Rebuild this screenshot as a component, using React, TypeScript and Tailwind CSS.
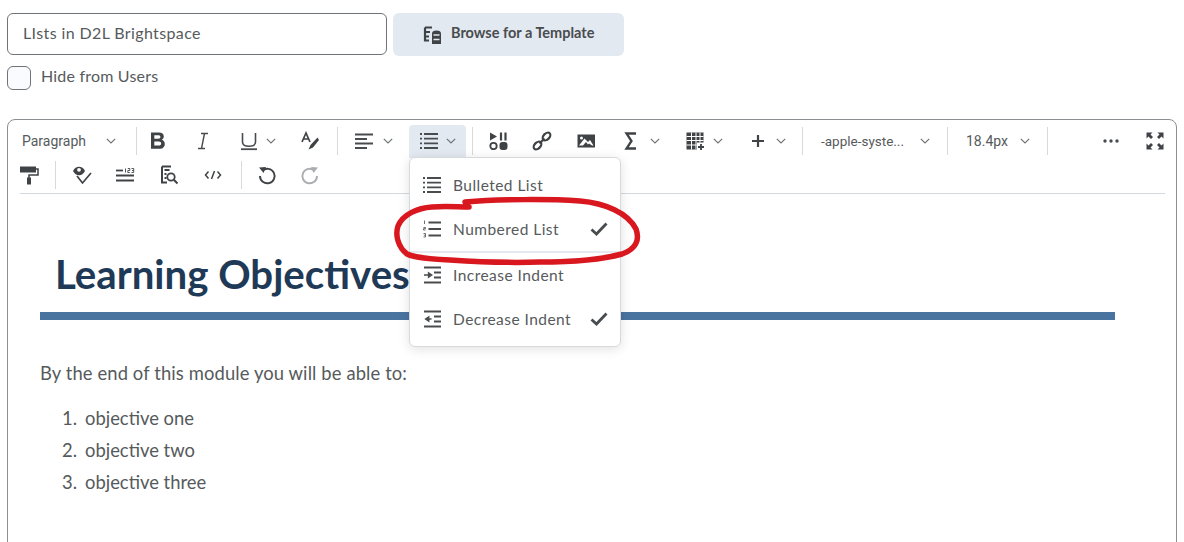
import React from "react";

const C = "#494c4e";

function Svg({ children, className = "" }: { children: React.ReactNode; className?: string }) {
  return (
    <svg viewBox="0 0 20 20" width="20" height="20" fill="none" className={"shrink-0 " + className}>
      {children}
    </svg>
  );
}

function Chev({ className = "" }: { className?: string }) {
  return (
    <svg viewBox="0 0 10 6" width="10" height="6" fill="none" className={"shrink-0 " + className}>
      <path d="M0.8 0.8 L5 5 L9.2 0.8" stroke="#6e7376" strokeWidth="1.2" />
    </svg>
  );
}

function Sep({ className = "" }: { className?: string }) {
  return <div className={"w-px h-[28px] bg-[#d6dadd] shrink-0 " + className} />;
}

const Bold = ({ className = "" }: { className?: string }) => (
  <Svg className={className}>
    <path d="M3 1.500h8c3 0 4.800 1.500 4.800 4 0 1.600-.8 2.800-2.200 3.300 2 .5 3.200 2 3.200 4.100 0 3-2.100 4.900-5.300 4.900H3z M6.300 4.300v3.400h4c1.300 0 2.100-.6 2.100-1.700s-.8-1.700-2.100-1.700z M6.300 10.400v4.200h4.500c1.500 0 2.400-.8 2.400-2.100s-.9-2.100-2.400-2.100z" fill="#3f4345" fillRule="evenodd" />
  </Svg>
);
const Italic = ({ className = "" }: { className?: string }) => (
  <Svg className={className}>
    <path d="M8 2.500h7M5 17.500h7M11.500 2.500 L8.500 17.500" stroke={C} strokeWidth="1.400" />
  </Svg>
);
const Underline = ({ className = "" }: { className?: string }) => (
  <Svg className={className}>
    <path d="M3.500 2v9c0 3 2.300 4.300 6.500 4.300s6.500-1.300 6.500-4.300V2" stroke={C} strokeWidth="1.600" />
    <path d="M2 18.200h16" stroke={C} strokeWidth="1.800" />
  </Svg>
);
const FontColor = ({ className = "" }: { className?: string }) => (
  <Svg className={className}>
    <path d="M2 11 L6 2 L10 11 M3.500 8h5" stroke="#3f4345" strokeWidth="1.700" />
    <path d="M17.500 6.500 L10.500 14 L8.500 18.500 L13 16.500 L19 9z" fill="#3f4345" />
  </Svg>
);
const Lines = ({ d, className = "", w = 2 }: { d: string; className?: string; w?: number }) => (
  <Svg className={className}>
    <path d={d} stroke={C} strokeWidth={w} />
  </Svg>
);
const Align = ({ className = "" }: { className?: string }) => (
  <Lines className={className} d="M1 3.500h18M1 8h12M1 12.500h18M1 17h12" w={1.800} />
);
const Bullets = ({ className = "" }: { className?: string }) => (
  <Svg className={className}>
    <path d="M5 3h14M5 7.700h14M5 12.400h14M5 17h14" stroke={C} strokeWidth="1.800" />
    <path d="M1 3h2M1 7.700h2M1 12.400h2M1 17h2" stroke={C} strokeWidth="1.800" />
  </Svg>
);
const Numbered = ({ className = "" }: { className?: string }) => (
  <Svg className={className}>
    <path d="M6.500 3.500h12.500M6.500 10h12.500M6.500 16.500h12.500" stroke={C} strokeWidth="1.800" />
    <path d="M2.500 1.500v3.500M1.500 8.500h2v1.200h-2v1.300h2M1.500 14.500h2v3.500h-2M1.800 16.200h1.500" stroke={C} strokeWidth="0.800" />
  </Svg>
);
const Indent = ({ out, className = "" }: { out?: boolean; className?: string }) => (
  <Svg className={className}>
    <path d="M2 2.500h17M2 17.500h17M12 7.500h7M12 12.500h7" stroke={C} strokeWidth="1.800" />
    {out ? (
      <path d="M9.500 10H4.500M6.800 7.800 L3.500 10 L6.800 12.200z" stroke={C} strokeWidth="1.300" fill={C} />
    ) : (
      <path d="M2 10h6M6.500 7.800 L9.800 10 L6.500 12.200z" stroke={C} strokeWidth="1.300" fill={C} />
    )}
  </Svg>
);
const Check = () => (
  <svg viewBox="0 0 18 14" width="18" height="14" fill="none" className="shrink-0">
    <path d="M1.500 7.500 L6.500 12 L16.500 1.500" stroke="#494c4e" strokeWidth="2.800" />
  </svg>
);
const Media = ({ className = "" }: { className?: string }) => (
  <Svg className={className}>
    <path d="M2 1.500 L9 5.500 L2 9.500z" fill="#3f4345" />
    <path d="M13 1.500v8M17.500 1.500v8" stroke="#3f4345" strokeWidth="2.200" />
    <circle cx="5.500" cy="15" r="3.200" stroke="#3f4345" strokeWidth="1.800" />
    <rect x="11.500" y="11" width="8" height="8" rx="3" fill="#3f4345" />
  </Svg>
);
const LinkI = ({ className = "" }: { className?: string }) => (
  <Svg className={className}>
    <g stroke="#3f4345" strokeWidth="2.200" fill="none">
      <ellipse cx="5.500" cy="14.500" rx="3" ry="4.500" transform="rotate(45 5.500 14.500)" />
      <ellipse cx="14.500" cy="5.500" rx="3" ry="4.500" transform="rotate(45 14.500 5.500)" />
      <path d="M7.500 12.500 L12.500 7.500" />
    </g>
  </Svg>
);
const ImageI = ({ className = "" }: { className?: string }) => (
  <Svg className={className}>
    <path d="M1.500 3.500h17.500v13H1.500z M3 14.500h4l3-3.500 2 2.500 1 -1 3 2H17.500l-3.500-5.500-2 2-3.500-3.500z" fill="#3f4345" fillRule="evenodd" />
    <circle cx="5.500" cy="7" r="1.500" fill="#fff" />
  </Svg>
);
const Sigma = ({ className = "" }: { className?: string }) => (
  <Svg className={className}>
    <path d="M15 2.500H5.500L10.500 10 L5.500 17.500H15" stroke="#3f4345" strokeWidth="2.300" />
  </Svg>
);
const TableI = ({ className = "" }: { className?: string }) => (
  <Svg className={className}>
    <path d="M1.500 1.500h17v10h-6.500v7H1.500z" fill="#3f4345" />
    <path d="M6.500 1.500v17M11 1.500v17M15 1.500v10M1.500 5.500h17M1.500 9.500h17M1.500 14h10" stroke="#fff" strokeWidth="1" />
    <path d="M16 13v6M13 16h6" stroke="#3f4345" strokeWidth="1.800" />
  </Svg>
);
const Plus = ({ className = "" }: { className?: string }) => (
  <Svg className={className}>
    <path d="M10 4v12M4 10h12" stroke="#3f4345" strokeWidth="2.200" />
  </Svg>
);
const Dots = ({ className = "" }: { className?: string }) => (
  <Svg className={className}>
    <circle cx="4" cy="10" r="1.700" fill={C} />
    <circle cx="10" cy="10" r="1.700" fill={C} />
    <circle cx="16" cy="10" r="1.700" fill={C} />
  </Svg>
);
const FullScreen = ({ className = "" }: { className?: string }) => (
  <Svg className={className}>
    <g fill="#3f4345">
      <path d="M1.500 1.500h6l-2 2 2.500 2.500-2 2-2.500-2.500-2 2z" />
      <path d="M18.500 1.500h-6l2 2-2.500 2.500 2 2 2.500-2.500 2 2z" />
      <path d="M1.500 18.500h6l-2-2 2.500-2.500-2-2-2.500 2.500-2-2z" />
      <path d="M18.500 18.500h-6l2-2-2.500-2.500 2-2 2.500 2.500 2-2z" />
    </g>
  </Svg>
);
const Roller = ({ className = "" }: { className?: string }) => (
  <Svg className={className}>
    <path d="M1 1.500h16v6H1z" fill="#3f4345" />
    <path d="M17 4h2v6H10V13" stroke="#3f4345" strokeWidth="1.500" />
    <path d="M8 12.500h4v7H8z" fill="#3f4345" />
  </Svg>
);
const EyeCheck = ({ className = "" }: { className?: string }) => (
  <Svg className={className}>
    <path d="M1 6c1.500-2.800 3.500-4.200 6-4.200S11.500 3.200 13 6c-1.500 2.800-3.500 4.200-6 4.200S2.500 8.800 1 6z" fill="#3f4345" />
    <circle cx="7" cy="4.800" r="1.900" fill="#fff" />
    <path d="M5 11 L10.500 18 L19 8" stroke="#3f4345" strokeWidth="1.700" />
  </Svg>
);
const WordCount = ({ className = "" }: { className?: string }) => (
  <Svg className={className}>
    <path d="M1 10.500h18M1 15.500h18" stroke="#3f4345" strokeWidth="1.800" />
    <path d="M1 5.500h7" stroke="#3f4345" strokeWidth="1.800" />
    <path d="M10.500 3.500v4M12.800 3.500h2v2h-2v2h2M16.500 3.500h2.200v4h-2.200M17 5.500h1.500" stroke="#3f4345" strokeWidth="0.900" />
  </Svg>
);
const FindDoc = ({ className = "" }: { className?: string }) => (
  <Svg className={className}>
    <path d="M3 1.500h9M3 1.500v16h5M5.500 5h5M5.500 9h2M5.500 13h2" stroke="#3f4345" strokeWidth="2" />
    <circle cx="12" cy="12" r="3.700" stroke="#3f4345" strokeWidth="1.800" />
    <path d="M14.800 14.800 L18.500 18.500" stroke="#3f4345" strokeWidth="2" />
  </Svg>
);
const Code = ({ className = "" }: { className?: string }) => (
  <Svg className={className}>
    <path d="M5.500 6.500 L2.500 10 L5.500 13.500M14.500 6.500 L17.500 10 L14.500 13.500M11.500 6 L8.500 14" stroke="#3f4345" strokeWidth="1.500" />
  </Svg>
);
const Undo = ({ className = "", color = "#3f4345" }: { className?: string; color?: string }) => (
  <Svg className={className}>
    <path d="M5.500 5.500 A7.300 7.300 0 1 1 3 11" stroke={color} strokeWidth="1.900" />
    <path d="M2 2.500 L9 2 L6.500 8z" fill={color} />
  </Svg>
);
const TemplateI = ({ className = "" }: { className?: string }) => (
  <Svg className={className}>
    <path d="M3 2.500h7M3 2.500v13h4M3 7h5M3 11.500h4" stroke="#3f4345" strokeWidth="2.200" />
    <path d="M10 8.500c0-2 1.500-3 4.500-3s4.500 1 4.500 3V19H10z" fill="#3f4345" />
    <path d="M11.500 10h6M11.500 14.500h6" stroke="#e3e9f1" strokeWidth="1.400" />
  </Svg>
);

function MenuItem({
  icon,
  label,
  checked,
  className = "",
}: {
  icon: React.ReactNode;
  label: string;
  checked?: boolean;
  className?: string;
}) {
  return (
    <div className={"flex items-center pl-[12px] pr-[12px] " + className}>
      {icon}
      <span className="ml-[11px] mt-[2px] flex-1 text-[15.5px] text-[#565a5c] tracking-[0.46px]">{label}</span>
      {checked && <Check />}
    </div>
  );
}

export default function App() {
  return (
    <div className="relative w-[1184px] h-[542px] overflow-hidden bg-white font-['Lato','Liberation_Sans',sans-serif] text-[#494c4e]">
      <div className="flex items-start gap-[6px] pt-[13px] pl-[7px]">
        <div className="w-[380px] h-[42px] rounded-[6px] border border-[#6e7477] pl-[15px] pb-[2px] flex items-center text-[16px] tracking-[0.38px] text-[#565a5c]">
          LIsts in D2L Brightspace
        </div>
        <div className="w-[231px] h-[43px] rounded-[6px] bg-[#e3e9f1] flex items-center pl-[29px] gap-[9px] text-[14.5px] font-bold text-[#494c4e]">
          <TemplateI />
          <span className="-mt-[4px]">Browse for a Template</span>
        </div>
      </div>

      <div className="flex items-center mt-[10px] pl-[7px]">
        <div className="w-[24px] h-[24px] rounded-[6px] border border-[#6e7477] bg-[#f9fbff]" />
        <span className="ml-[10px] -mt-[5px] text-[16px] text-[#565a5c] tracking-[0.2px]">Hide from Users</span>
      </div>

      <div className="mt-[29px] ml-[7px] w-[1170px] h-[500px] rounded-t-[8px] border border-[#8b8f92]">
        <div className="ml-[12px] mr-[11px] pt-[4px] border-b border-[#d3d9dc] h-[74px] font-['Roboto','Liberation_Sans',sans-serif] text-[14px] text-[#565a5c]">
          <div className="flex items-center h-[34px]">
            <span className="ml-[2px] w-[84px] shrink-0">Paragraph</span>
            <Chev />
            <Sep className="ml-[20px]" />
            <Bold className="ml-[11px]" />
            <Italic className="ml-[25px]" />
            <Underline className="ml-[26px]" />
            <Chev className="ml-[7px]" />
            <FontColor className="ml-[24px]" />
            <Sep className="ml-[17px]" />
            <Align className="ml-[16px]" />
            <Chev className="ml-[9px]" />
            <div className="ml-[16px] w-[57px] h-[33px] rounded-t-[4px] bg-[#e3e9f1] flex items-center pl-[10px] gap-[7px] shrink-0">
              <Bullets />
              <Chev />
            </div>
            <Sep className="ml-[6px]" />
            <Media className="ml-[15px]" />
            <LinkI className="ml-[24px]" />
            <ImageI className="ml-[24px]" />
            <Sigma className="ml-[25px]" />
            <Chev className="ml-[9px]" />
            <TableI className="ml-[25px]" />
            <Chev className="ml-[8px]" />
            <Plus className="ml-[25px]" />
            <Chev className="ml-[8px]" />
            <Sep className="ml-[16px]" />
            <span className="ml-[18px] w-[99px] shrink-0 text-[13.5px] whitespace-nowrap">-apple-syste...</span>
            <Chev />
            <Sep className="ml-[17px]" />
            <span className="ml-[18px] w-[54px] shrink-0">18.4px</span>
            <Chev />
            <Sep className="ml-[17px]" />
            <Dots className="ml-[53px]" />
            <FullScreen className="ml-[24px]" />
          </div>
          <div className="flex items-center h-[34px] -ml-[1px]">
            <Roller />
            <Sep className="ml-[16px]" />
            <EyeCheck className="ml-[16px]" />
            <WordCount className="ml-[23px]" />
            <FindDoc className="ml-[24px]" />
            <Code className="ml-[24px]" />
            <Sep className="ml-[18px]" />
            <Undo className="ml-[15px]" />
            <Undo className="ml-[23px] -scale-x-100" color="#a9adb0" />
          </div>
        </div>

        <div className="pl-[32px]">
          <h1 className="mt-[58px] ml-[15px] text-[40.2px] leading-[44px] font-bold text-[#1f3a57] whitespace-nowrap">
            Learning Objectives
          </h1>
          <div className="mt-[16px] w-[1075px] h-[8px] bg-[#4a74a0]" />
          <p className="mt-[41px] text-[18.4px] leading-[24px] tracking-[0.11px] text-[#565a5c]">
            By the end of this module you will be able to:
          </p>
          <ol className="mt-[17px] pl-[22px] list-none text-[18.4px] leading-[32px] text-[#565a5c]">
            <li className="flex"><span className="w-[23px]">1.</span>objective one</li>
            <li className="flex"><span className="w-[23px]">2.</span>objective two</li>
            <li className="flex"><span className="w-[23px]">3.</span>objective three</li>
          </ol>
        </div>
      </div>

      {/* list dropdown */}
      <div className="absolute left-[409px] top-[157px] w-[212px] h-[190px] rounded-[6px] border border-[#d6dadd] bg-white shadow-[0_2px_12px_rgba(0,0,0,0.12)] pt-[5px]">
        <MenuItem className="h-[44px]" icon={<Bullets />} label="Bulleted List" />
        <MenuItem className="h-[44px]" icon={<Numbered />} label="Numbered List" checked />
        <div className="h-[2px] bg-[#e6eaf0]" />
        <MenuItem className="h-[44px]" icon={<Indent />} label="Increase Indent" />
        <MenuItem className="h-[44px]" icon={<Indent out />} label="Decrease Indent" checked />
      </div>

      {/* hand-drawn annotation */}
      <svg className="absolute left-0 top-0 pointer-events-none" width="1184" height="542" fill="none">
        <path
          d="M465 202 C500 199 550 199 580 201 C605 203 628 213 636 229 C640 240 636 249 622 254 C600 260 570 262 540 262 C510 263 480 262 450 260 C430 259 415 258 407 254 C398 247 395 235 398 226 C403 214 418 208 432 207 C445 206 458 207 469 207"
          stroke="#d8171f"
          strokeWidth="5.500"
          strokeLinecap="round"
        />
      </svg>
    </div>
  );
}
